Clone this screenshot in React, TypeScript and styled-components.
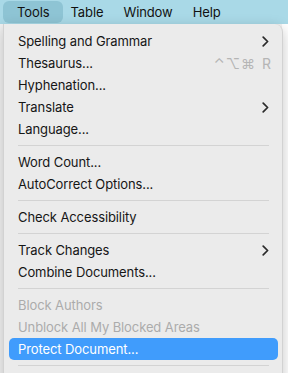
import React from 'react';
import styled, { createGlobalStyle } from 'styled-components';

const GlobalStyle = createGlobalStyle`
    html, body {
        margin: 0;
        padding: 0;
        width: 288px;
        height: 373px;
        overflow: hidden;
    }
    body {
        font-family: Inter, "Noto Sans", "Liberation Sans", sans-serif;
        background: #f4f4f4;
    }
`;

const Screen = styled.div`
    position: relative;
    width: 288px;
    height: 373px;
    overflow: hidden;
    background: linear-gradient(90deg, #f2f2f2 0%, #f2f2f2 98%, #ffffff 98%);
`;

const MenuBar = styled.div`
    display: flex;
    align-items: center;
    height: 24px;
    padding: 0 3px;
    background: #a9d9e7;
`;

const BarItem = styled.div<{ active?: boolean }>`
    height: 22px;
    display: flex;
    align-items: center;
    padding: 0 ${p => (p.active ? '14px' : '10px')};
    margin-right: ${p => (p.active ? '-3px' : '0')};
    border-radius: 6px;
    font-size: 13px;
    letter-spacing: -0.1px;
    color: #111111;
    background: ${p => (p.active ? '#8ec4d4' : 'transparent')};
`;

const Dropdown = styled.div`
    position: absolute;
    top: 24px;
    left: 3px;
    width: 280px;
    height: 380px;
    box-sizing: border-box;
    padding: 6px 4px 5px 5px;
    background: #ebebeb;
    border: 1px solid #d2d2d2;
    border-top: none;
    border-radius: 0 8px 8px 8px;
    box-shadow: 0 4px 14px rgba(0, 0, 0, 0.22);
    display: flex;
    flex-direction: column;
`;

const Item = styled.div<{ disabled?: boolean; selected?: boolean }>`
    height: 22px;
    display: flex;
    align-items: center;
    justify-content: space-between;
    padding: 0 9px 0 9px;
    border-radius: 5px;
    font-size: 13px;
    letter-spacing: -0.1px;
    color: ${p => (p.selected ? '#ffffff' : p.disabled ? '#ababab' : '#161616')};
    background: ${p => (p.selected ? '#409cfc' : 'transparent')};
`;

const Shortcut = styled.span`
    color: #b5b5b5;
    font-size: 14px;
    letter-spacing: 1px;
    word-spacing: 1px;
    margin-right: -3px;
`;

const Separator = styled.div`
    height: 1px;
    margin: 5px 9px 5px 9px;
    background: #d3d3d3;
`;

const Chevron = () => (
    <svg width="7" height="11" viewBox="0 0 7 11">
        <path d="M1.2 1.2 L5.6 5.5 L1.2 9.8" fill="none" stroke="#2a2a2a" strokeWidth="1.7" strokeLinecap="round" strokeLinejoin="round" />
    </svg>
);

type Entry =
    | { kind: 'item'; label: string; submenu?: boolean; shortcut?: string; disabled?: boolean; selected?: boolean }
    | { kind: 'sep' };

const entries: Entry[] = [
    { kind: 'item', label: 'Spelling and Grammar', submenu: true },
    { kind: 'item', label: 'Thesaurus...', shortcut: '⌃⌥⌘ R' },
    { kind: 'item', label: 'Hyphenation...' },
    { kind: 'item', label: 'Translate', submenu: true },
    { kind: 'item', label: 'Language...' },
    { kind: 'sep' },
    { kind: 'item', label: 'Word Count...' },
    { kind: 'item', label: 'AutoCorrect Options...' },
    { kind: 'sep' },
    { kind: 'item', label: 'Check Accessibility' },
    { kind: 'sep' },
    { kind: 'item', label: 'Track Changes', submenu: true },
    { kind: 'item', label: 'Combine Documents...' },
    { kind: 'sep' },
    { kind: 'item', label: 'Block Authors', disabled: true },
    { kind: 'item', label: 'Unblock All My Blocked Areas', disabled: true },
    { kind: 'item', label: 'Protect Document...', selected: true },
    { kind: 'sep' },
];

const App: React.FC = () => {
    return (
        <Screen>
            <GlobalStyle />
            <MenuBar>
                <BarItem active>Tools</BarItem>
                <BarItem>Table</BarItem>
                <BarItem>Window</BarItem>
                <BarItem>Help</BarItem>
            </MenuBar>
            <Dropdown>
                {entries.map((e, i) =>
                    e.kind === 'sep' ? (
                        <Separator key={i} />
                    ) : (
                        <Item key={i} disabled={e.disabled} selected={e.selected}>
                            <span>{e.label}</span>
                            {e.submenu && <Chevron />}
                            {e.shortcut && <Shortcut>{e.shortcut}</Shortcut>}
                        </Item>
                    )
                )}
            </Dropdown>
        </Screen>
    );
};

export default App;
